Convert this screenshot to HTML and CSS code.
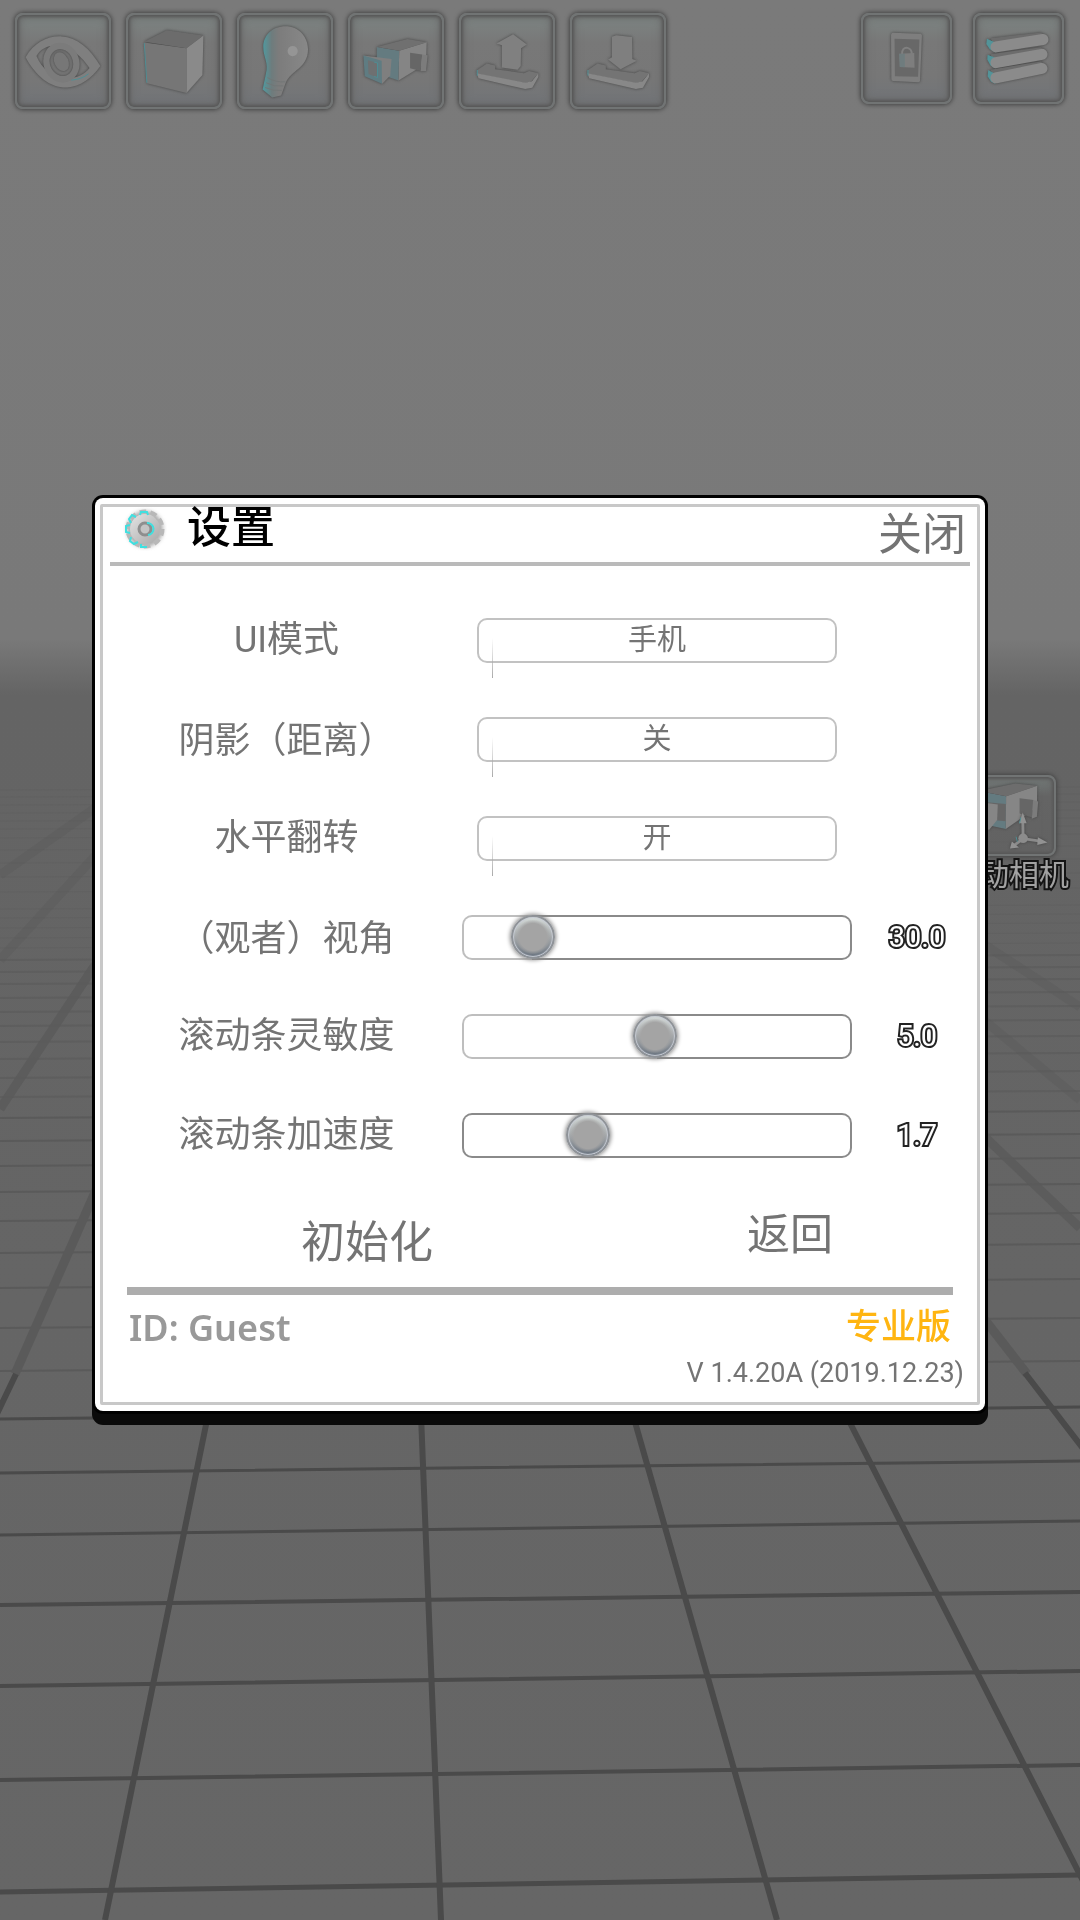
FILE: index.html
```html
<!DOCTYPE html>
<html lang="zh-CN">
<head>
    <meta charset="UTF-8">
    <meta name="viewport" content="width=device-width, initial-scale=1.0">
    <title>设置</title>
    <link rel="stylesheet" href="styles.css">
</head>
<body>
    <!-- floor grid -->
    <svg class="scene" viewBox="0 0 1080 1920" preserveAspectRatio="none" aria-hidden="true">
        <defs>
            <linearGradient id="sky" x1="0" y1="0" x2="0" y2="1">
                <stop offset="0" stop-color="#7a7a7a"/>
                <stop offset="0.333" stop-color="#797979"/>
                <stop offset="0.345" stop-color="#707070"/>
                <stop offset="0.362" stop-color="#646464"/>
                <stop offset="1" stop-color="#666"/>
            </linearGradient>
        </defs>
        <rect width="1080" height="1920" fill="url(#sky)"/>
        <g fill="none" stroke="#616161" stroke-width="1">
            <path d="M0 790 1080 787M0 797 1080 794M0 805 1080 802M0 813 1080 810M0 821 1080 818M0 829 1080 826M0 838 1080 834M0 850 1080 846M0 863 1080 859M0 877 1080 873M0 892 1080 888M0 909 1080 905M0 918 1080 914M0 928 1080 923M0 938 1080 933M0 948 1080 943"/>
        </g>
        <g fill="none" stroke="#5a5a5a" stroke-width="2">
            <path stroke-opacity=".6" d="M0 960 1080 955M0 972 1080 967M0 984 1080 979M0 998 1080 992M0 1012 1080 1006M0 1026 1080 1020M0 1042 1080 1036M0 1059 1080 1053M0 1078 1080 1071M0 1097 1080 1091"/>
            <path d="M0 1118 1080 1111M0 1141 1080 1134M0 1166 1080 1158M0 1192 1080 1184M0 1221 1080 1213M0 1253 1080 1244M0 1288 1080 1279M0 1328 1080 1318M0 1371 1080 1361"/>
        </g>
        <g fill="none" stroke="#5a5a5a" stroke-width="9">
            <path d="M15 1374 103 1174"/>
            <path stroke-opacity=".8" d="M0 1109 95 965M985 1137 1080 1228"/>
            <path stroke-opacity=".35" d="M0 960 95 856M0 875 95 808M985 1021 1080 1100M985 945 1080 1007"/>
            <path d="M985 1320 1027 1374"/>
        </g>
        <g fill="none" stroke="#4a4a4a">
            <path stroke-width="3" d="M0 1419 1080 1407M0 1473 1080 1461M0 1535 1080 1521"/>
            <path stroke-width="4" d="M0 1605 1080 1592M0 1686 1080 1671M0 1780 1080 1765"/>
            <path stroke-width="5" d="M0 1892 1080 1875"/>
            <path stroke-width="6" d="M208 1415 105 1920M421 1415 441 1920M633 1415 777 1920M846 1415 1103 1920M1025 1373 1085 1451M16 1374 -4 1416"/>
        </g>
    </svg>

    <header class="toolbar">
        <button class="tool" type="button" aria-label="视图">
            <svg viewBox="45 38 288 288">
                <g class="solid">
                    <path fill-rule="evenodd" fill="#7f7f7f" d="M72 170C98 125 140 103 185 105c48 3 88 36 121 93-28 38-62 65-104 67-54 1-98-36-130-95zM106 166c16 40 50 66 88 70 35 2 62-11 78-32-24-36-53-61-94-69-31-4-57 5-72 31z"/>
                    <ellipse cx="184" cy="187" rx="46" ry="53" fill="none" stroke="#7b7b7b" stroke-width="20" transform="rotate(-20 184 187)"/>
                    <ellipse cx="184" cy="184" rx="22" ry="31" fill="#777" transform="rotate(-25 184 184)"/>
                </g>
                <path class="glow" d="M215 242c22-2 40-8 54-20"/>
            </svg>
        </button>
        <button class="tool" type="button" aria-label="物体">
            <svg viewBox="379 38 288 288">
                <g class="solid">
                    <path fill="#767676" d="M430 124 562 142 562 282 438 252z"/>
                    <path fill="#6c6c6c" d="M430 122 500 86 615 102 562 142z"/>
                    <path fill="#8a8a8a" d="M562 142 615 102 612 226 562 282z"/>
                </g>
                <path class="glow" d="M430 126 438 250"/>
            </svg>
        </button>
        <button class="tool" type="button" aria-label="灯光">
            <svg viewBox="711 38 288 288">
                <defs>
                    <linearGradient id="bulb">
                        <stop offset="0" stop-color="#4f9aa0"/>
                        <stop offset=".2" stop-color="#6e7c7d"/>
                        <stop offset=".35" stop-color="#7c7c7c"/>
                        <stop offset="1" stop-color="#888"/>
                    </linearGradient>
                </defs>
                <g class="solid">
                    <path fill="url(#bulb)" d="M856 73c42 0 71 33 71 72 0 60-54 65-70 106l-14 39-28 6-30-25 10-48c10-36-8-52-8-85 0-38 30-65 69-65z"/>
                </g>
                <path d="M800 234q26 16 56 13M796 250q24 14 54 10M793 265q24 12 52 9" fill="none" stroke="#727676" stroke-width="3"/>
                <circle cx="879" cy="151" r="16" fill="#959595"/>
            </svg>
        </button>
        <button class="tool" type="button" aria-label="相机">
            <svg viewBox="24 38 288 288">
                <g class="solid">
                    <path fill="#647b80" d="M108 138 178 150 176 243 108 220z"/>
                    <path fill="#707070" d="M108 138 204 113 264 123 178 150z"/>
                    <path fill="#858585" d="M178 150 264 123 262 190 176 243z"/>
                    <path fill="#666" d="M212 156 250 162 245 213 212 205z"/>
                    <path fill="#7c7c7c" d="M250 162 267 164 262 213 245 214z"/>
                    <path fill="#7f7f7f" d="M66 165 154 176 150 227 125 253z"/>
                    <path fill="#5f7c82" d="M66 165 123 181 124 253 70 230z"/>
                    <path fill="#6e7071" d="M80 180 110 188 110 234 82 223z"/>
                </g>
                <path class="glow" d="M100 186 110 188 110 234 100 230"/>
            </svg>
        </button>
        <button class="tool" type="button" aria-label="导出">
            <svg viewBox="355 38 288 288">
                <g class="solid">
                    <path fill="#808080" d="M466 127 518 98 561 130 543 142 542 198 532 209 483 202 483 133z"/>
                    <path fill="#747474" d="M404 212 436 190 462 196 462 208 552 220 568 213 597 220 575 246 556 252 404 222z"/>
                    <path fill="#888" d="M404 220 556 250 577 245 597 220 597 232 578 266 556 270 410 236z"/>
                </g>
                <path class="glow" d="M406 210v18"/>
            </svg>
        </button>
        <button class="tool" type="button" aria-label="导入">
            <svg viewBox="688 38 288 288">
                <g class="solid">
                    <path fill="#7f7f7f" d="M813 106 826 101 876 107 877 176 891 181 840 208 801 177 813 170z"/>
                    <path fill="#747474" d="M736 212 768 190 794 196 794 208 884 220 900 213 929 220 907 246 888 252 736 222z"/>
                    <path fill="#888" d="M736 220 888 250 909 245 929 220 929 232 910 266 888 270 742 236z"/>
                </g>
                <path class="glow" d="M738 210v18"/>
            </svg>
        </button>
        <div class="toolbar-right">
            <button class="tool" type="button" aria-label="锁定屏幕">
                <svg viewBox="62 42 270 270">
                    <g class="solid">
                        <path fill="#7e7e7e" d="M155 97 241 100q4 1 4 6l-6 140q-1 5-6 5l-78-4q-5-1-5-6l-1-138q1-6 6-6z"/>
                    </g>
                    <path fill="#686868" d="M160 116 237 118 233 234 161 232z"/>
                    <path d="M183 164q0-22 17-20 14 3 13 20" fill="none" stroke="#808080" stroke-width="6"/>
                    <path fill="#7e7e7e" d="M174 162 221 160 222 206 176 203z"/>
                    <path fill="#667b7e" d="M174 162 192 162 192 204 176 203z" opacity=".6"/>
                </svg>
            </button>
            <button class="tool" type="button" aria-label="菜单">
                <svg viewBox="402 42 270 270">
                    <g class="solid">
                        <path fill="#6c6c6c" d="M450 212 606 186 626 205 460 235z"/>
                        <path fill="#6c6c6c" d="M450 164 606 142 626 160 460 185zM450 114 606 96 628 112 460 132z"/>
                        <path fill="#539499" d="M443 213 465 225 465 255 452 249 441 232zM441 165 465 175 465 208 450 199 440 180zM439 116 465 127 465 158 448 148 437 132z"/>
                        <path d="M467 237 610 208M467 190 610 164M467 141 613 118" fill="none" stroke="#8b8b8b" stroke-width="34" stroke-linecap="round"/>
                    </g>
                </svg>
            </button>
        </div>
    </header>

    <div class="side-tool">
        <button class="tool" id="move_camera" type="button" aria-labelledby="move_camera_label">
            <svg viewBox="75 46 276 240">
                <g class="solid">
                    <path fill="#647b80" d="M120 90 204 106 203 208 120 190z"/>
                    <path fill="#666" d="M120 122 203 130 203 184 120 176z"/>
                    <path fill="#6d6d6d" d="M120 90 232 66 301 73 204 106z"/>
                    <path fill="#868686" d="M204 106 301 73 300 140 203 208z"/>
                    <path fill="#666" d="M246 112 290 118 285 172 246 160z"/>
                    <path fill="#7c7c7c" d="M288 118 304 122 300 170 284 176z"/>
                    <path fill="#868686" d="M90 120 178 132 176 180 150 212z"/>
                </g>
                <g class="solid">
                    <path d="M257 236 256 184M257 238 310 246M257 238 228 260" fill="none" stroke="#8a8a8a" stroke-width="9"/>
                    <path fill="#929292" d="M256 157 268 190 244 190zM303 234 333 250 301 258zM216 269 222 247 244 266z"/>
                    <circle cx="257" cy="237" r="15" fill="#8c8c8c"/>
                </g>
                <path class="glow" d="M250 172 246 190M235 232l4 16"/>
            </svg>
        </button>
        <label class="side-label" id="move_camera_label" for="move_camera">移动相机</label>
    </div>

    <main class="overlay">
        <form class="dialog" onsubmit="return false;">
            <div class="frame">
                <div class="head">
                    <svg class="gear" viewBox="0 0 44 44" aria-hidden="true">
                        <defs>
                            <linearGradient id="metal" x1="0" y1="0" x2="1" y2="1">
                                <stop offset="0" stop-color="#e4e4e4"/>
                                <stop offset="1" stop-color="#a8a8a8"/>
                            </linearGradient>
                        </defs>
                        <circle class="shade" cx="22" cy="22" r="18"/>
                        <circle class="teeth" cx="22" cy="22" r="16"/>
                        <circle cx="22" cy="22" r="15" fill="url(#metal)"/>
                        <path d="M17 8l1-3h6l1 3M13 10l-4-2-3 4 2 4M7 18l-4 1v6l4 1M8 30l-1 4 4 3 4-2M18 37l0 3h6" fill="none" stroke="#3fe0e0" stroke-width="2"/>
                        <circle cx="22" cy="22" r="6" fill="#c4c4c4" stroke="#8e8e8e" stroke-width="3"/>
                        <path d="M24 16a6 6 0 0 1 1 12" fill="none" stroke="#3fe0e0" stroke-width="2"/>
                    </svg>
                    <h1>设置</h1>
                    <button class="text-button close" type="button">关闭</button>
                </div>

                <div class="rows">
                    <div class="row">
                        <label for="ui_mode">UI模式</label>
                        <button class="choice" id="ui_mode" type="button">手机</button>
                    </div>
                    <div class="row">
                        <label for="shadow">阴影<span class="paren" lang="zh-TW">（</span>距离<span class="paren" lang="zh-TW">）</span></label>
                        <button class="choice" id="shadow" type="button">关</button>
                    </div>
                    <div class="row">
                        <label for="flip">水平翻转</label>
                        <button class="choice" id="flip" type="button">开</button>
                    </div>
                    <div class="row">
                        <label for="fov"><span class="paren" lang="zh-TW">（</span>观者<span class="paren" lang="zh-TW">）</span>视角</label>
                        <input type="range" id="fov" min="10" max="156" step="any" value="30" style="--pos: 18%">
                        <output for="fov">30.0</output>
                    </div>
                    <div class="row">
                        <label for="sensitivity">滚动条灵敏度</label>
                        <input type="range" id="sensitivity" min="0.1" max="10" step="any" value="5" style="--pos: 50%">
                        <output for="sensitivity">5.0</output>
                    </div>
                    <div class="row">
                        <label for="acceleration">滚动条加速度</label>
                        <input type="range" id="acceleration" min="0.3" max="5" step="any" value="1.7" style="--pos: 0%">
                        <output for="acceleration">1.7</output>
                    </div>
                </div>

                <div class="actions">
                    <button class="text-button reset" type="reset">初始化</button>
                    <button class="text-button back" type="button">返回</button>
                </div>

                <div class="account">
                    <span class="user">ID: Guest</span>
                    <span class="edition">专业版</span>
                </div>
                <p class="version">V 1.4.20A (2019.12.23)</p>
            </div>
        </form>
    </main>
</body>
</html>
```
FILE: styles.css
```css
* {
    box-sizing: border-box;
}
body {
    margin: 0;
    min-height: 100vh;
    overflow: hidden;
    background: #666;
    font-family: Roboto, "Noto Sans CJK SC", sans-serif;
    color: #747474;
}
button {
    margin: 0;
    padding: 0;
    font-family: inherit;
    color: inherit;
    cursor: pointer;
}
.scene {
    position: fixed;
    inset: 0;
    width: 100%;
    height: 100%;
}

/* toolbar */
.toolbar {
    position: relative;
    display: flex;
    gap: 15px;
    padding: 13px 16px 0 15px;
}
.toolbar-right {
    display: flex;
    gap: 21px;
    margin-left: auto;
}
.tool {
    width: 96px;
    height: 96px;
    border: 2px solid #717474;
    border-radius: 8px;
    background: linear-gradient(#7d8583, #787878 30%, #777 70%, #717478);
    box-shadow: 0 0 4px 1px #444, inset 0 0 3px 2px #585858, inset 0 0 10px 2px #686868;
}
.toolbar-right .tool {
    width: 91px;
    height: 91px;
}
.tool svg {
    display: block;
    width: 100%;
    height: 100%;
}
.solid {
    filter: drop-shadow(0 0 5px #444);
}
.glow {
    fill: none;
    stroke: #4e8e94;
    stroke-width: 3;
}
.side-tool {
    position: absolute;
    top: 775px;
    right: 11px;
    display: flex;
    flex-direction: column;
    align-items: center;
}
.side-tool .tool {
    width: 94px;
    height: 81px;
    background: linear-gradient(#747c7a, #646464 25%, #626262);
}
.side-label {
    font-size: 30px;
    line-height: 38px;
    color: #a2a2a2;
    -webkit-text-stroke: 4px #141414;
    paint-order: stroke fill;
}

/* settings dialog */
.overlay {
    position: fixed;
    inset: 0;
    display: grid;
    align-items: center;
    padding: 0 95px 12px;
}
.dialog {
    padding: 6px 5px;
    background: #fff;
    border-radius: 8px;
    box-shadow: 0 0 0 3px #000, 0 11px 0 3px #0a0a0a;
}
.frame {
    border: 3px solid #c8c8c8;
    border-radius: 2px;
}
.head {
    display: flex;
    align-items: flex-start;
    height: 59px;
    margin: 0 7px;
    padding: 0 4px 0 13px;
    border-bottom: 4px solid #bababa;
}
.gear {
    width: 44px;
    height: 44px;
}
.teeth {
    fill: none;
    stroke: #b8b8b8;
    stroke-width: 7;
    stroke-dasharray: 6 4;
}
.shade {
    fill: #aaa;
    filter: blur(2px);
}
h1 {
    margin: 0 0 0 20px;
    font-size: 44px;
    line-height: 43px;
    font-weight: 500;
    color: #000;
}
.text-button {
    border: none;
    background: none;
    font-size: 44px;
    line-height: 57px;
}
.close {
    margin-left: auto;
}
.rows {
    margin-top: 25px;
}
.row {
    display: grid;
    grid-template-columns: 359fr 390fr 125fr;
    align-items: center;
    justify-items: center;
    height: 99px;
}
.row label {
    padding-left: 8px;
    font-size: 36px;
    line-height: 45px;
}
.paren {
    font-family: "Noto Sans CJK TC", sans-serif;
}
.choice {
    position: relative;
    width: calc(100% - 30px);
    height: 45px;
    border: 2px solid #c2c2c2;
    border-radius: 10px;
    background: #fff;
    font-size: 29px;
    line-height: 38px;
}
.choice::before {
    content: "";
    position: absolute;
    left: 13px;
    top: 18px;
    width: 1px;
    height: 40px;
    background: linear-gradient(transparent, #aaa);
}
input[type="range"] {
    appearance: none;
    width: 100%;
    height: 45px;
    margin: 0;
    border: 2px solid transparent;
    border-radius: 10px;
    background:
        linear-gradient(#fff, #fff) padding-box,
        linear-gradient(to right, #bebebe var(--pos), #8a8a8a var(--pos)) border-box;
}
input[type="range"]::-webkit-slider-thumb {
    appearance: none;
    width: 44px;
    height: 44px;
    border: 2px solid #8f9398;
    border-radius: 50%;
    background: radial-gradient(circle, #a4a4a4 48%, transparent 62%), linear-gradient(#d4dad8, #a5a8aa 50%, #68727e);
    box-shadow: 0 0 4px 1px #888, inset 0 0 1px 1px #c8cdd6;
}
output {
    padding-left: 5px;
    font-size: 29px;
    line-height: 45px;
    color: #fff;
    -webkit-text-stroke: 4px #222;
    paint-order: stroke fill;
}
.actions {
    display: grid;
    grid-template-columns: 528fr 318fr;
    align-items: start;
    height: 102px;
    padding: 22px 28px 0 0;
}
.reset {
    padding-top: 8px;
}
.back {
    font-size: 43px;
}
.account {
    display: flex;
    justify-content: space-between;
    align-items: center;
    height: 69px;
    margin: 0 24px;
    padding: 5px 2px 0;
    border-top: 8px solid #adadad;
    line-height: 60px;
}
.user {
    font-family: "Noto Sans", sans-serif;
    font-size: 36px;
    font-weight: 600;
    color: #999;
}
.edition {
    font-size: 35px;
    font-weight: 500;
    color: #ffb511;
}
.version {
    margin: 0;
    padding: 0 13px 12px 0;
    font-size: 27px;
    line-height: 34px;
    text-align: right;
}
```
